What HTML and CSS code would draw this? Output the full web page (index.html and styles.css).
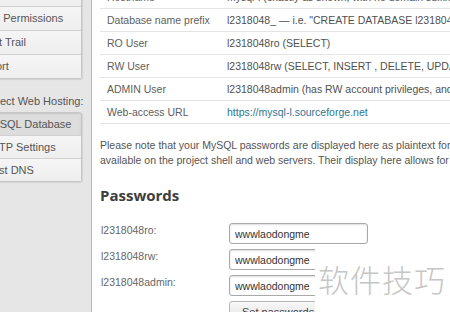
FILE: index.html
```html
<!DOCTYPE html>
<html lang="en">
<head>
    <meta charset="UTF-8">
    <title>MySQL Database</title>
    <link rel="stylesheet" href="styles.css">
</head>
<body>
    <div class="page">
        <div class="sidebar">
            <div class="nav-group">
                <a class="nav-item">Tools</a>
                <a class="nav-item">User Permissions</a>
                <a class="nav-item">Audit Trail</a>
                <a class="nav-item">Export</a>
            </div>
            <div class="nav-title">Select Web Hosting:</div>
            <div class="nav-group sub">
                <a class="nav-item active">MySQL Database</a>
                <a class="nav-item">SFTP Settings</a>
                <a class="nav-item">Host DNS</a>
            </div>
        </div>

        <div class="main">
            <table class="info">
                <tr><td class="key">Hostname</td><td>mysql-l (exactly as shown, with no domain suffix)</td></tr>
                <tr><td class="key">Database name prefix</td><td>l2318048_ — i.e. "CREATE DATABASE l2318048_mydb;"</td></tr>
                <tr><td class="key">RO User</td><td>l2318048ro (SELECT)</td></tr>
                <tr><td class="key">RW User</td><td>l2318048rw (SELECT, INSERT , DELETE, UPDATE)</td></tr>
                <tr><td class="key">ADMIN User</td><td>l2318048admin (has RW account privileges, and more)</td></tr>
                <tr><td class="key">Web-access URL</td><td><a class="link" href="#">https://mysql-l.sourceforge.net</a></td></tr>
            </table>

            <p class="note">Please note that your MySQL passwords are displayed here as plaintext for convenience; they are also available on the project shell and web servers. Their display here allows for easy reference.</p>

            <h2>Passwords</h2>

            <div class="pw-form">
                <div class="pw-row">
                    <label>l2318048ro:</label>
                    <input type="text" value="wwwlaodongme">
                </div>
                <div class="pw-row">
                    <label>l2318048rw:</label>
                    <input type="text" value="wwwlaodongme">
                </div>
                <div class="pw-row">
                    <label>l2318048admin:</label>
                    <input type="text" value="wwwlaodongme">
                </div>
                <div class="pw-row">
                    <label></label>
                    <button>Set passwords</button>
                </div>
            </div>
        </div>
    </div>

    <div class="watermark">软件技巧</div>
</body>
</html>
```

FILE: styles.css
```css
body {
    margin: 0;
    font-family: "Liberation Sans", Arial, sans-serif;
    font-size: 10.5px;
    color: #555;
    background: #fff;
    position: relative;
    height: 312px;
    overflow: hidden;
}

.page {
    display: flex;
    margin-left: -30px;
    height: 312px;
}

.sidebar {
    width: 122px;
    box-sizing: border-box;
    flex-shrink: 0;
    padding: 0 9px 0 4px;
    background: #e6e6e6;
    border-right: 1px solid #b9b9b9;
    margin-top: -18px;
    white-space: nowrap;
}

.nav-group {
    display: flex;
    flex-direction: column;
    border: 1px solid #c6c6c6;
    border-radius: 3px;
    box-shadow: 1px 1px 1px #d2d2d2;
    background: #f1f1f1;
}

.nav-item {
    display: block;
    height: 23px;
    line-height: 23px;
    padding-left: 2px;
    color: #555;
    font-size: 11px;
    border-top: 1px solid #d2d2d2;
    background: linear-gradient(#f5f5f5, #eeeeee);
}

.nav-item:first-child {
    border-top: none;
}

.nav-group.sub .nav-item {
    padding-left: 10px;
    height: 22px;
    line-height: 22px;
}

.nav-item.active {
    background: #dddddd;
    box-shadow: inset 0 1px 2px #c4c4c4;
}

.nav-title {
    font-size: 11px;
    line-height: 12px;
    color: #555;
    padding: 16px 0 5px 10px;
}

.main {
    flex: 1;
    padding-left: 8px;
    margin-top: -14px;
}

.info {
    width: 100%;
    border-collapse: collapse;
    white-space: nowrap;
}

.info td {
    height: 22px;
    padding: 0 0 0 7px;
    border-bottom: 1px solid #e4e4e4;
    color: #505050;
}

.info td.key {
    width: 113px;
    color: #606060;
}

.link {
    color: #2f7593;
    text-decoration: none;
}

.note {
    margin: 14px 0 0;
    line-height: 15px;
    color: #555;
    width: 480px;
}

h2 {
    font-family: "Open Sans", sans-serif;
    font-size: 15px;
    font-weight: bold;
    color: #3d3d3d;
    margin: 17px 0 0;
}

.pw-form {
    margin-top: 18px;
    display: flex;
    flex-direction: column;
    gap: 5px;
}

.pw-row {
    display: flex;
    align-items: flex-start;
}

.pw-row label {
    width: 128px;
    padding: 1px 0 0 1px;
    color: #666;
}

.pw-row input {
    width: 127px;
    height: 19px;
    padding: 0 5px;
    border: 1px solid #a9a9a9;
    border-radius: 3px;
    box-shadow: inset 0 1px 2px #ddd;
    font-family: "Liberation Sans", Arial, sans-serif;
    font-size: 10.5px;
    color: #333;
}

.pw-row button {
    height: 22px;
    padding: 0 12px;
    border: 1px solid #b5b5b5;
    border-radius: 3px;
    background: linear-gradient(#f7f7f7, #e4e4e4);
    font-family: "Liberation Sans", Arial, sans-serif;
    font-size: 11px;
    color: #444;
}

.watermark {
    position: absolute;
    left: 315px;
    top: 246px;
    width: 135px;
    height: 66px;
    background: #fff;
    color: #c6c6c6;
    font-family: "Noto Sans CJK SC", sans-serif;
    font-weight: 300;
    font-size: 31px;
    padding: 10px 0 0 3px;
    box-sizing: border-box;
    letter-spacing: 1px;
}
```
